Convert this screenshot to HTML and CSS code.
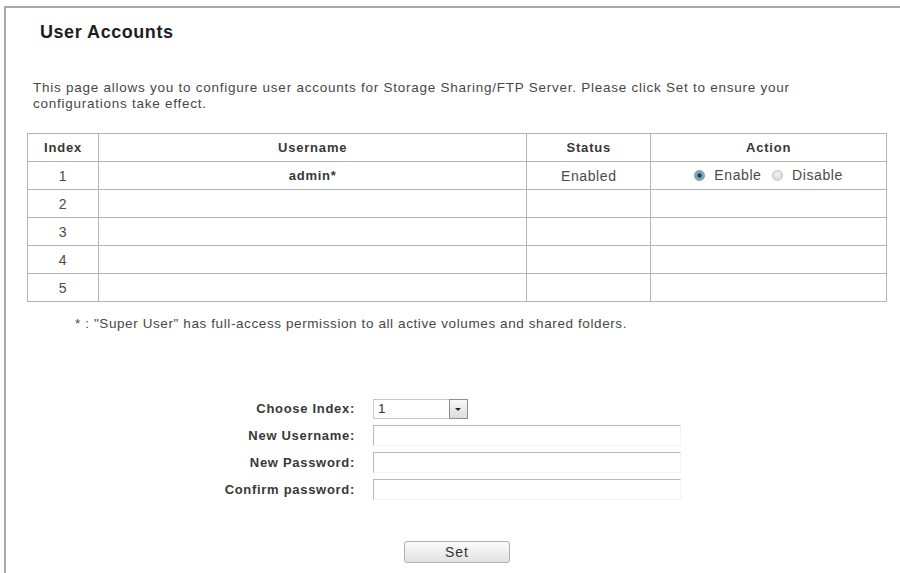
FILE: index.html
```html
<!DOCTYPE html>
<html>
<head>
<meta charset="utf-8">
<title>User Accounts</title>
<link rel="stylesheet" href="styles.css">
</head>
<body>
<div class="frame">
  <h1 class="title">User Accounts</h1>
  <p class="intro">This page allows you to configure user accounts for Storage Sharing/FTP Server. Please click Set to ensure your configurations take effect.</p>

  <table class="accounts">
    <colgroup>
      <col class="c-index">
      <col class="c-user">
      <col class="c-status">
      <col class="c-action">
    </colgroup>
    <thead>
      <tr><th>Index</th><th>Username</th><th>Status</th><th>Action</th></tr>
    </thead>
    <tbody>
      <tr>
        <td>1</td>
        <td class="user">admin*</td>
        <td>Enabled</td>
        <td>
          <label class="radio"><span class="dot on"></span>Enable</label>
          <label class="radio"><span class="dot"></span>Disable</label>
        </td>
      </tr>
      <tr><td>2</td><td></td><td></td><td></td></tr>
      <tr><td>3</td><td></td><td></td><td></td></tr>
      <tr><td>4</td><td></td><td></td><td></td></tr>
      <tr><td>5</td><td></td><td></td><td></td></tr>
    </tbody>
  </table>
  <p class="note">* : "Super User" has full-access permission to all active volumes and shared folders.</p>

  <div class="form">
    <span class="lbl">Choose Index:</span>
    <div class="select"><span class="val">1</span><span class="arrow"></span></div>
    <span class="lbl">New Username:</span>
    <span class="field"></span>
    <span class="lbl">New Password:</span>
    <span class="field"></span>
    <span class="lbl">Confirm password:</span>
    <span class="field"></span>
  </div>

  <div class="actions">
    <button class="btn" type="button">Set</button>
  </div>
</div>
</body>
</html>
```

FILE: styles.css
```css
html, body {
  margin: 0;
  background: #fff;
}

body {
  font-family: "Liberation Sans", Arial, sans-serif;
  color: #3a3a3a;
  height: 573px;
  overflow: hidden;
}

.frame {
  margin: 6px 0 0 4px;
  border-top: 2px solid #a8a8a8;
  border-left: 2px solid #a8a8a8;
  height: 700px;
  padding: 0 0 0 21px;
}

.title {
  margin: 0;
  padding: 13px 0 0 13px;
  font-size: 18px;
  letter-spacing: 0.55px;
  font-weight: bold;
  color: #1e1e1e;
  line-height: 22px;
}

.intro {
  margin: 37px 0 0 6px;
  width: 760px;
  font-size: 13.5px;
  letter-spacing: 0.75px;
  line-height: 16px;
  color: #474747;
}

.accounts {
  margin-top: 21px;
  border-collapse: collapse;
  width: 860px;
  font-size: 14px;
  letter-spacing: 0.6px;
  color: #4a4a4a;
}

.c-index { width: 71px; }
.c-user { width: 429px; }
.c-status { width: 124px; }
.c-action { width: 236px; }

.accounts th,
.accounts td {
  border: 1px solid #b4b4b4;
  height: 27px;
  padding: 0;
  text-align: center;
}

.accounts th {
  font-weight: bold;
  font-size: 13px;
  letter-spacing: 0.8px;
  color: #383838;
}

.accounts td.user {
  font-weight: bold;
  font-size: 13px;
  letter-spacing: 0.7px;
  color: #383838;
}

.radio {
  display: inline-flex;
  align-items: center;
  gap: 9px;
  margin: 0 2px;
}

.radio + .radio {
  margin-left: 4px;
}

.dot {
  width: 11px;
  height: 11px;
  border-radius: 50%;
  background: radial-gradient(circle at 50% 40%, #f4f4f4, #cfcfcf);
  border: 1px solid #c6c6c6;
  box-sizing: border-box;
}

.dot.on {
  background: radial-gradient(circle, #1d3f52 0 25%, #6f97ad 38%, #a9c4d3 100%);
  border-color: #7d9bb0;
}

.note {
  margin: 14px 0 0 48px;
  font-size: 13.5px;
  letter-spacing: 0.6px;
  line-height: 16px;
  color: #474747;
}

.form {
  margin-top: 67px;
  display: grid;
  grid-template-columns: 328px 308px;
  column-gap: 18px;
  row-gap: 6px;
  align-items: center;
}

.lbl {
  text-align: right;
  font-weight: bold;
  font-size: 13px;
  letter-spacing: 0.7px;
  color: #383838;
  line-height: 18px;
}

.select {
  width: 95px;
  height: 20px;
  box-sizing: border-box;
  border: 1px solid #c8c8c8;
  border-right: none;
  position: relative;
  font-size: 13.5px;
  line-height: 18px;
  color: #333;
}

.select .val {
  padding-left: 4px;
}

.select .arrow {
  position: absolute;
  right: 0;
  top: -1px;
  width: 19px;
  height: 20px;
  box-sizing: border-box;
  border: 1px solid #8e8e8e;
  background: linear-gradient(#f7f7f7, #dcdcdc);
}

.select .arrow::after {
  content: "";
  position: absolute;
  left: 5px;
  top: 8px;
  border-left: 3px solid transparent;
  border-right: 3px solid transparent;
  border-top: 3px solid #222;
}

.field {
  height: 21px;
  box-sizing: border-box;
  border-top: 1px solid #b8b8b8;
  border-left: 1px solid #b8b8b8;
  border-bottom: 1px solid #f4f4f4;
  border-right: 1px solid #f4f4f4;
}

.actions {
  margin-top: 41px;
  padding-left: 377px;
}

.btn {
  width: 106px;
  height: 22px;
  border: 1px solid #b0b0b0;
  border-radius: 3px;
  background: linear-gradient(#fbfbfb, #e2e2e2);
  font-family: "Liberation Sans", Arial, sans-serif;
  font-size: 14px;
  letter-spacing: 1px;
  color: #333;
  padding: 0;
}
```
